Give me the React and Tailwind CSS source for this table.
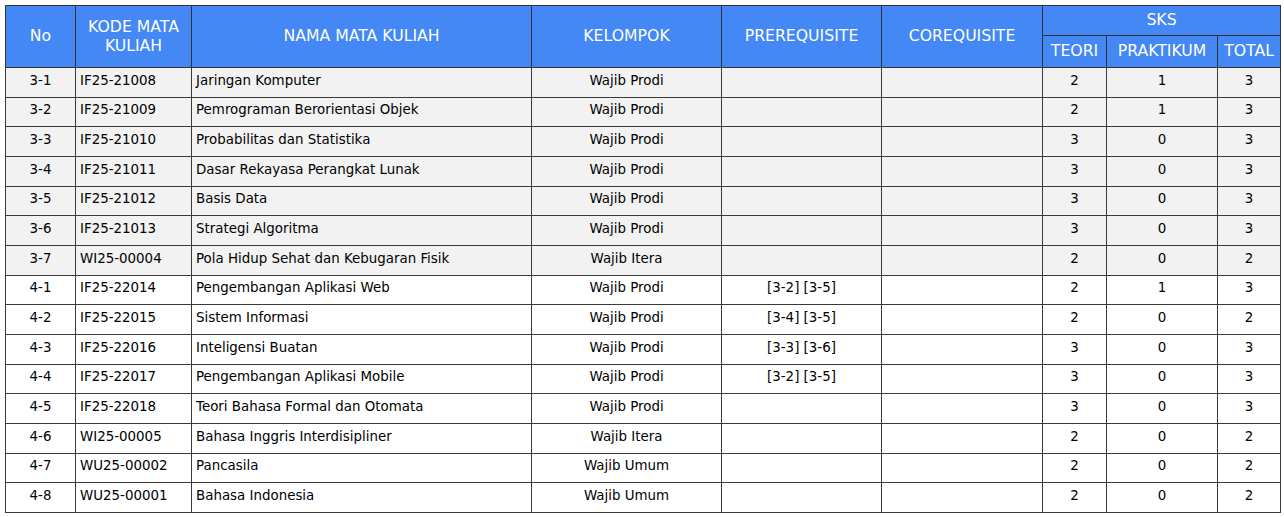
import React from "react";

const rows = [
  ["3-1", "IF25-21008", "Jaringan Komputer", "Wajib Prodi", "", "", 2, 1, 3],
  ["3-2", "IF25-21009", "Pemrograman Berorientasi Objek", "Wajib Prodi", "", "", 2, 1, 3],
  ["3-3", "IF25-21010", "Probabilitas dan Statistika", "Wajib Prodi", "", "", 3, 0, 3],
  ["3-4", "IF25-21011", "Dasar Rekayasa Perangkat Lunak", "Wajib Prodi", "", "", 3, 0, 3],
  ["3-5", "IF25-21012", "Basis Data", "Wajib Prodi", "", "", 3, 0, 3],
  ["3-6", "IF25-21013", "Strategi Algoritma", "Wajib Prodi", "", "", 3, 0, 3],
  ["3-7", "WI25-00004", "Pola Hidup Sehat dan Kebugaran Fisik", "Wajib Itera", "", "", 2, 0, 2],
  ["4-1", "IF25-22014", "Pengembangan Aplikasi Web", "Wajib Prodi", "[3-2] [3-5]", "", 2, 1, 3],
  ["4-2", "IF25-22015", "Sistem Informasi", "Wajib Prodi", "[3-4] [3-5]", "", 2, 0, 2],
  ["4-3", "IF25-22016", "Inteligensi Buatan", "Wajib Prodi", "[3-3] [3-6]", "", 3, 0, 3],
  ["4-4", "IF25-22017", "Pengembangan Aplikasi Mobile", "Wajib Prodi", "[3-2] [3-5]", "", 3, 0, 3],
  ["4-5", "IF25-22018", "Teori Bahasa Formal dan Otomata", "Wajib Prodi", "", "", 3, 0, 3],
  ["4-6", "WI25-00005", "Bahasa Inggris Interdisipliner", "Wajib Itera", "", "", 2, 0, 2],
  ["4-7", "WU25-00002", "Pancasila", "Wajib Umum", "", "", 2, 0, 2],
  ["4-8", "WU25-00001", "Bahasa Indonesia", "Wajib Umum", "", "", 2, 0, 2],
];

const th = "border border-[#333] bg-[#4388f5] text-white font-normal text-[15.7px] leading-[19px] text-center align-middle p-0 pb-[2px]";
const td = "border border-[#3a3a3a] h-[29.67px] p-0 pb-[3px] align-middle";

export default function App() {
  return (
    <div className="bg-white w-[1284px] h-[517px] pt-[5px] pl-[5px]" style={{ fontFamily: '"DejaVu Sans", Verdana, sans-serif' }}>
      <table className="table-fixed border-collapse w-[1275px] text-[13.4px] text-black">
        <colgroup>
          <col className="w-[70px]" />
          <col className="w-[116px]" />
          <col className="w-[340px]" />
          <col className="w-[190px]" />
          <col className="w-[160px]" />
          <col className="w-[161px]" />
          <col className="w-[64px]" />
          <col className="w-[111px]" />
          <col className="w-[63px]" />
        </colgroup>
        <thead>
          <tr className="h-[30px]">
            <th rowSpan={2} className={th}>No</th>
            <th rowSpan={2} className={th}>KODE MATA<br />KULIAH</th>
            <th rowSpan={2} className={th}>NAMA MATA KULIAH</th>
            <th rowSpan={2} className={th}>KELOMPOK</th>
            <th rowSpan={2} className={th}>PREREQUISITE</th>
            <th rowSpan={2} className={th}>COREQUISITE</th>
            <th colSpan={3} className={th + " text-[14px]"}>SKS</th>
          </tr>
          <tr className="h-[32px]">
            <th className={th}>TEORI</th>
            <th className={th}>PRAKTIKUM</th>
            <th className={th}>TOTAL</th>
          </tr>
        </thead>
        <tbody>
          {rows.map((r, i) => (
            <tr key={r[0]} className={i < 7 ? "bg-[#f2f2f2]" : "bg-white"}>
              <td className={td + " text-center"}>{r[0]}</td>
              <td className={td + " pl-[4px]"}>{r[1]}</td>
              <td className={td + " pl-[4px]"}>{r[2]}</td>
              <td className={td + " text-center"}>{r[3]}</td>
              <td className={td + " text-center"}>{r[4]}</td>
              <td className={td + " text-center"}>{r[5]}</td>
              <td className={td + " text-center"}>{r[6]}</td>
              <td className={td + " text-center"}>{r[7]}</td>
              <td className={td + " text-center"}>{r[8]}</td>
            </tr>
          ))}
        </tbody>
      </table>
    </div>
  );
}
